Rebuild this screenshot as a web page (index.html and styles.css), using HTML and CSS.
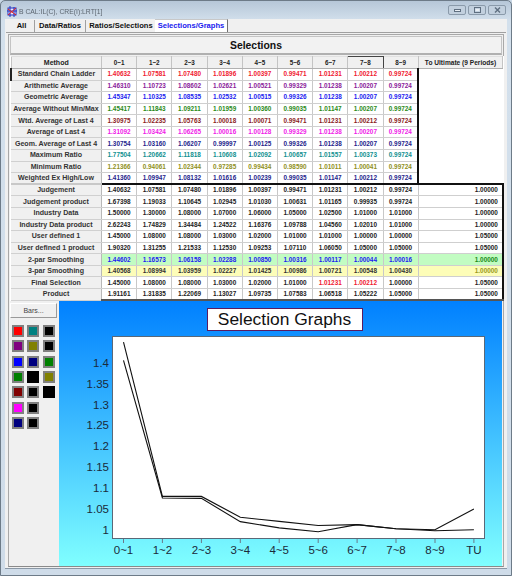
FILE: index.html
```html
<!DOCTYPE html>
<html>
<head>
<meta charset="utf-8">
<title>B CAL:IL(C), CRE(I):LRT[1]</title>
<link rel="stylesheet" href="styles.css">
</head>
<body>
<div class="window">
  <div class="titlebar">
    <svg class="appicon" width="11" height="11" viewBox="0 0 11 11"><rect x="1" y="2" width="8" height="7" fill="#e8e8ff" stroke="#2030c0"/><path d="M3 0v11M7 1v10M0 5h10" stroke="#2030c0" fill="none"/><path d="M1 9L9 2M1 3l8 6" stroke="#e02020" fill="none"/></svg>
    <span class="wintitle">B CAL:IL(C), CRE(I):LRT[1]</span>
    <div class="winbtns">
      <span class="wb"><svg width="7" height="5" viewBox="0 0 7 5"><rect x="0.5" y="2.5" width="6" height="2" fill="#e8eef4" stroke="#5f6f80"/></svg></span>
      <span class="wb"><svg width="7" height="6" viewBox="0 0 7 6"><rect x="0.5" y="0.5" width="6" height="5" fill="none" stroke="#5f6f80"/><rect x="1.5" y="2" width="4" height="2" fill="#e8eef4"/></svg></span>
      <span class="wb"><svg width="7" height="6" viewBox="0 0 7 6"><path d="M1 0.5l5 5M6 0.5l-5 5" stroke="#5f6f80" stroke-width="1.4"/></svg></span>
    </div>
  </div>
  <div class="client">
    <div class="tabs">
      <span class="tab t1">All</span>
      <span class="tab t2">Data/Ratios</span>
      <span class="tab t3">Ratios/Selections</span>
      <span class="tab active">Selections/Graphs</span>
    </div>
    <div class="panel">
      <div class="heading">Selections</div>
      <table class="grid">
        <colgroup><col class="cm"><col class="cn"><col class="cn"><col class="cn"><col class="cn"><col class="cn"><col class="cn"><col class="cn"><col class="cn"><col class="cn"><col class="cu"></colgroup>
        <thead><tr><th>Method</th><th>0~1</th><th>1~2</th><th>2~3</th><th>3~4</th><th>4~5</th><th>5~6</th><th>6~7</th><th class="sel">7~8</th><th>8~9</th><th>To Ultimate (9 Periods)</th></tr></thead>
        <tbody>
          <tr class="red first"><th class="cur">Standard Chain Ladder</th><td>1.40632</td><td>1.07581</td><td>1.07480</td><td>1.01896</td><td>1.00397</td><td>0.99471</td><td>1.01231</td><td>1.00212</td><td>0.99724</td><td class="u"></td></tr>
          <tr class="purple"><th>Arithmetic Average</th><td>1.46310</td><td>1.10723</td><td>1.08602</td><td>1.02621</td><td>1.00521</td><td>0.99329</td><td>1.01238</td><td>1.00207</td><td>0.99724</td><td class="u"></td></tr>
          <tr class="blue"><th>Geometric Average</th><td>1.45347</td><td>1.10325</td><td>1.08535</td><td>1.02532</td><td>1.00515</td><td>0.99326</td><td>1.01238</td><td>1.00207</td><td>0.99724</td><td class="u"></td></tr>
          <tr class="green"><th>Average Without Min/Max</th><td>1.45417</td><td>1.11843</td><td>1.09211</td><td>1.01959</td><td>1.00360</td><td>0.99035</td><td>1.01147</td><td>1.00207</td><td>0.99724</td><td class="u"></td></tr>
          <tr class="maroon"><th>Wtd. Average of Last 4</th><td>1.30975</td><td>1.02235</td><td>1.05763</td><td>1.00018</td><td>1.00071</td><td>0.99471</td><td>1.01231</td><td>1.00212</td><td>0.99724</td><td class="u"></td></tr>
          <tr class="magenta"><th>Average of Last 4</th><td>1.31092</td><td>1.03424</td><td>1.06265</td><td>1.00016</td><td>1.00128</td><td>0.99329</td><td>1.01238</td><td>1.00207</td><td>0.99724</td><td class="u"></td></tr>
          <tr class="navy"><th>Geom. Average of Last 4</th><td>1.30754</td><td>1.03160</td><td>1.06207</td><td>0.99997</td><td>1.00125</td><td>0.99326</td><td>1.01238</td><td>1.00207</td><td>0.99724</td><td class="u"></td></tr>
          <tr class="teal"><th>Maximum Ratio</th><td>1.77504</td><td>1.20662</td><td>1.11818</td><td>1.10608</td><td>1.02092</td><td>1.00657</td><td>1.01557</td><td>1.00373</td><td>0.99724</td><td class="u"></td></tr>
          <tr class="olive"><th>Minimum Ratio</th><td>1.21366</td><td>0.94061</td><td>1.02344</td><td>0.97285</td><td>0.99434</td><td>0.98590</td><td>1.01011</td><td>1.00041</td><td>0.99724</td><td class="u"></td></tr>
          <tr class="navy last"><th>Weighted Ex High/Low</th><td>1.41360</td><td>1.09947</td><td>1.08132</td><td>1.01616</td><td>1.00239</td><td>0.99035</td><td>1.01147</td><td>1.00212</td><td>0.99724</td><td class="u"></td></tr>
          <tr class="plain"><th>Judgement</th><td>1.40632</td><td>1.07581</td><td>1.07480</td><td>1.01896</td><td>1.00397</td><td>0.99471</td><td>1.01231</td><td>1.00212</td><td>0.99724</td><td>1.00000</td></tr>
          <tr class="plain"><th>Judgement product</th><td>1.67398</td><td>1.19033</td><td>1.10645</td><td>1.02945</td><td>1.01030</td><td>1.00631</td><td>1.01165</td><td>0.99935</td><td>0.99724</td><td>1.00000</td></tr>
          <tr class="plain"><th>Industry Data</th><td>1.50000</td><td>1.30000</td><td>1.08000</td><td>1.07000</td><td>1.06000</td><td>1.05000</td><td>1.02500</td><td>1.01000</td><td>1.01000</td><td>1.00000</td></tr>
          <tr class="plain"><th>Industry Data product</th><td>2.62243</td><td>1.74829</td><td>1.34484</td><td>1.24522</td><td>1.16376</td><td>1.09788</td><td>1.04560</td><td>1.02010</td><td>1.01000</td><td>1.00000</td></tr>
          <tr class="plain"><th>User defined 1</th><td>1.45000</td><td>1.08000</td><td>1.08000</td><td>1.03000</td><td>1.02000</td><td>1.01000</td><td>1.01000</td><td>1.00000</td><td>1.00000</td><td>1.05000</td></tr>
          <tr class="plain"><th>User defined 1 product</th><td>1.90320</td><td>1.31255</td><td>1.21533</td><td>1.12530</td><td>1.09253</td><td>1.07110</td><td>1.06050</td><td>1.05000</td><td>1.05000</td><td>1.05000</td></tr>
          <tr class="par2"><th>2-par Smoothing</th><td>1.44602</td><td>1.16573</td><td>1.06158</td><td>1.02288</td><td>1.00850</td><td>1.00316</td><td>1.00117</td><td>1.00044</td><td>1.00016</td><td class="ug">1.00000</td></tr>
          <tr class="par3"><th>3-par Smoothing</th><td>1.40568</td><td>1.08994</td><td>1.03959</td><td>1.02227</td><td>1.01425</td><td>1.00986</td><td>1.00721</td><td>1.00548</td><td>1.00430</td><td class="uo">1.00000</td></tr>
          <tr class="plain"><th>Final Selection</th><td>1.45000</td><td>1.08000</td><td>1.08000</td><td>1.03000</td><td>1.02000</td><td>1.01000</td><td class="hot">1.01231</td><td class="hot">1.00212</td><td>1.00000</td><td>1.05000</td></tr>
          <tr class="plain end"><th>Product</th><td>1.91161</td><td>1.31835</td><td>1.22069</td><td>1.13027</td><td>1.09735</td><td>1.07583</td><td>1.06518</td><td>1.05222</td><td>1.05000</td><td>1.05000</td></tr>
        </tbody>
      </table>
      <div class="lower">
        <div class="side">
          <button class="bars">Bars...</button>
          <div class="swatches">
            <i class="sw c-red"></i><i class="sw c-teal"></i><i class="sw c-black"></i>
            <i class="sw c-purple"></i><i class="sw c-olive"></i><i class="sw c-black"></i>
            <i class="sw c-blue"></i><i class="sw c-navy"></i><i class="sw c-green"></i>
            <i class="sw c-green"></i><i class="sw c-black noedge"></i><i class="sw c-olive"></i>
            <i class="sw c-maroon"></i><i class="sw c-black"></i><i class="sw c-black noedge"></i>
            <i class="sw c-magenta"></i><i class="sw c-black"></i><i class="blank"></i>
            <i class="sw c-navy"></i><i class="sw c-black"></i><i class="blank"></i>
          </div>
        </div>
        <div class="chartarea">
          <div class="charttitle">Selection Graphs</div>
          <svg class="plot" width="443" height="225" viewBox="0 0 443 225">
            <rect x="53.5" y="0.5" width="372" height="202" fill="#fff" stroke="#5a6878"/>
            <g class="ticks">
              <path d="M64.5 203v4M103.4 203v4M142.4 203v4M181.3 203v4M220.2 203v4M259.2 203v4M298.1 203v4M337 203v4M376 203v4M414.9 203v4"/>
            </g>
            <g class="ylabels">
              <text x="50" y="197.5">1</text><text x="50" y="176.7">1.05</text><text x="50" y="155.8">1.1</text><text x="50" y="135">1.15</text><text x="50" y="114.2">1.2</text><text x="50" y="93.3">1.25</text><text x="50" y="72.5">1.3</text><text x="50" y="51.7">1.35</text><text x="50" y="30.8">1.4</text>
            </g>
            <g class="xlabels">
              <text x="64.5" y="218">0~1</text><text x="103.4" y="218">1~2</text><text x="142.4" y="218">2~3</text><text x="181.3" y="218">3~4</text><text x="220.2" y="218">4~5</text><text x="259.2" y="218">5~6</text><text x="298.1" y="218">6~7</text><text x="337" y="218">7~8</text><text x="376" y="218">8~9</text><text x="414.9" y="218">TU</text>
            </g>
            <polyline class="line" points="64.5,6.2 103.4,160.4 142.4,160.4 181.3,181.2 220.2,185.4 259.2,189.5 298.1,188.6 337,192.8 376,193.7 414.9,172.9"/>
            <polyline class="line" points="64.5,24.4 103.4,162 142.4,162.4 181.3,185.6 220.2,191.9 259.2,195.7 298.1,188.6 337,192.8 376,194.8 414.9,193.7"/>
          </svg>
        </div>
      </div>
    </div>
  </div>
</div>
</body>
</html>
```
FILE: styles.css
```css
* { box-sizing: border-box; }
html, body { margin: 0; padding: 0; }
body { width: 512px; height: 576px; overflow: hidden; font-family: "Liberation Sans", Arial, sans-serif; background: #c9d7e5; }
.window { width: 512px; height: 576px; display: flex; flex-direction: column; border: 1px solid #6d7b88; border-radius: 5px 5px 0 0; background: linear-gradient(#b6c7d8 0, #d3e0ec 20px, #cfdce9 100%); padding: 0 4px 6px 4px; filter: blur(0.3px); }
.titlebar { height: 18px; display: flex; align-items: center; padding: 3px 0 0 2px; flex: none; }
.appicon { flex: none; margin-right: 1px; }
.wintitle { font-size: 6.8px; color: #5c6670; }
.winbtns { margin-left: auto; margin-right: 1px; display: flex; gap: 2px; margin-top: -4px; }
.wb { width: 18px; height: 10px; display: flex; align-items: center; justify-content: center; border: 1px solid #8a9aaa; border-radius: 2px; background: #c2d0de; }
.client { flex: 1; min-height: 0; background: #f0f0f0; display: flex; flex-direction: column; padding: 0 1px; border-bottom: 1px solid #8a98a6; }
.tabs { height: 14px; flex: none; display: flex; align-items: flex-end; font-weight: bold; font-size: 7.6px; color: #111; border-bottom: 1px solid #a0a0a0; padding-left: 3px; }
.tab { height: 12px; padding-top: 1px; text-align: center; white-space: nowrap; border-right: 1px solid #a0a0a0; }
.t1 { width: 26px; }
.t2 { width: 51px; }
.t3 { width: 69px; border-right: 0; padding-left: 1px; }
.active { width: 73px; color: #2020ee; height: 13px; background: #fff; border-top: 1px solid #c8c8c8; border-right: 1px solid #707070; }
.panel { flex: 1; margin: 1px 2px 1px; min-height: 0; border: 1px solid #a8a8a8; border-bottom-color: #8a8a8a; border-right-width: 1px; padding: 0 1px; background: #f0f0f0; display: flex; flex-direction: column; }
.heading { height: 19px; flex: none; margin-top: 1px; text-align: center; font-weight: bold; font-size: 10.4px; line-height: 18px; color: #111; background: #f2f2f2; border: 1px solid #c4c4c4; border-bottom: 2px solid #b0b0b0; }
.grid { width: 492px; table-layout: fixed; border-collapse: collapse; background: #fff; flex: none; font-size: 6.4px; margin-top: 1px; }
.cm { width: 90.5px; }
.cn { width: 35.2px; }
.cu { width: 84.7px; }
.grid thead th { height: 12px; padding: 0; background: #f0f0f0; color: #222; text-align: center; font-size: 6.3px; border: 1px solid #c4c4c4; border-top: 1px solid #e0e0e0; border-bottom: 1px solid #b0b0b0; white-space: nowrap; overflow: hidden; }
.grid thead th:first-child { font-size: 7px; }
.grid thead th:last-child { font-size: 6.6px; }
.grid thead th.sel { border: 1px solid #444; border-bottom: 1px solid #b0b0b0; }
.grid tbody tr { height: 11.58px; }
.grid tbody th { padding: 0; background: #f0f0f0; color: #333; text-align: center; font-size: 7.05px; white-space: nowrap; font-weight: bold; border-right: 1px solid #b8b8b8; border-bottom: 1px solid #d0d0d0; overflow: hidden; line-height: 10px; }
.grid tbody th.cur { border-left: 2px solid #222; border-top: 1px solid #222; }
.grid td { padding: 0 4px 0 0; text-align: right; font-weight: bold; border-right: 1px solid #c8c8c8; border-bottom: 1px solid #cfcfcf; line-height: 10px; white-space: nowrap; }
.grid td:nth-child(2), .grid td:nth-child(3), .grid td:nth-child(4), .grid td:nth-child(5), .grid td:nth-child(6), .grid td:nth-child(7), .grid td:nth-child(8), .grid td:nth-child(9), .grid td:nth-child(10) { text-align: center; padding: 0; }
.grid td.u { border: 0; border-left: 2px solid #111; background: #fff; }
.grid tr.last td:not(.u), .grid tr.last th { border-bottom: 2px solid #111; }
.grid tr.last th { border-bottom-color: #c8c8c8; }
.grid tr.last td.u { border-bottom: 2px solid #111; }
.grid tr td:last-child { border-right: 2px solid #111; }
.grid tr td.u { border-right: 0; }
.grid tr.end td { border-bottom: 2px solid #555; }
.red td { color: #f02030; }
.purple td { color: #8a1a9a; }
.blue td { color: #1c1cf0; }
.green td { color: #2a8a18; }
.maroon td { color: #8a1c1c; }
.magenta td { color: #f020e8; }
.navy td { color: #24248c; }
.teal td { color: #109090; }
.olive td { color: #90901c; }
.plain td { color: #222; }
.par2 td { color: #1c1cf0; background: #c2fcc2; }
.par3 td { color: #333; background: #fdfdb8; }
.grid td.ug { color: #1a8a1a; }
.grid td.uo { color: #9a9a20; }
.grid td.hot { color: #f02030; }
.lower { flex: 1; min-height: 0; display: flex; margin-top: 0; }
.side { width: 49px; flex: none; background: #f0f0f0; }
.bars { display: block; width: 47px; height: 15px; padding: 0; margin-top: 2px; font-family: "Liberation Sans", Arial, sans-serif; font-size: 7px; color: #444; background: #f0f0f0; border: 1px solid #fff; border-right-color: #999; border-bottom-color: #999; }
.swatches { display: grid; grid-template-columns: repeat(3, 12px); grid-auto-rows: 12px; column-gap: 3.4px; row-gap: 3.3px; margin: 7px 0 0 2px; }
.sw { display: block; border: 2px solid #808080; }
.sw.noedge { border-color: #000; }
.c-red { background: #f00; }
.c-teal { background: #008080; }
.c-black { background: #000; }
.c-purple { background: #800080; }
.c-olive { background: #808000; }
.c-blue { background: #00f; }
.c-navy { background: #000080; }
.c-green { background: #008000; }
.c-maroon { background: #800000; }
.c-magenta { background: #f0f; }
.chartarea { flex: 1; min-width: 0; overflow: hidden; display: flex; flex-direction: column; align-items: center; background: linear-gradient(#0080ff, #80ffff); padding-top: 7px; }
.charttitle { width: 156px; height: 23px; flex: none; text-align: center; font-size: 17.4px; line-height: 21px; background: #fff; color: #111; border: 1px solid #5a1a60; margin-left: 8px; }
.plot { flex: none; margin-top: 5px; align-self: flex-start; }
.ticks path { stroke: #6a7888; fill: none; }
.ylabels text { font-size: 11.5px; fill: #1a2a3a; text-anchor: end; }
.xlabels text { font-size: 11.5px; fill: #1a2a3a; text-anchor: middle; }
.line { fill: none; stroke: #111; stroke-width: 1.1; }
```
